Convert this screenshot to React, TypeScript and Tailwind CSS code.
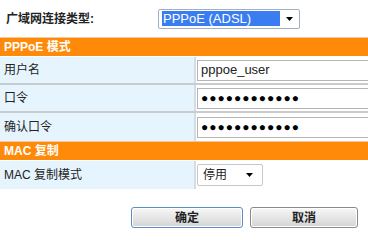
import React from 'react';

const font = { fontFamily: '"Liberation Sans", "Noto Sans CJK SC", sans-serif' };

const SectionHeader: React.FC<{ title: string }> = ({ title }) => (
  <div className="h-[19px] bg-[#ff8a0a] border-t border-[#f2c79a] flex items-center pl-[4px] text-white text-[12px] font-bold">
    {title}
  </div>
);

const Row: React.FC<{ label: string; children: React.ReactNode; last?: boolean }> = ({ label, children, last }) => (
  <div className={`flex h-[28px] ${last ? '' : 'border-b-2 border-[#c9cbcc]'}`}>
    <div className="w-[194px] bg-[#e6f5fd] flex items-center pl-[4px] text-[12px] text-[#222]">{label}</div>
    <div className="flex-1 border-l-2 border-[#d6dde2] bg-white flex items-center pl-[1px]">{children}</div>
  </div>
);

const Dots = () => (
  <span className="tracking-[1px] text-[12px] text-black">{'●●●●●●●●●●●●'}</span>
);

const Arrow = () => (
  <svg width="7" height="4" viewBox="0 0 7 4"><path d="M0 0h7L3.5 4z" fill="#000" /></svg>
);

export default function App() {
  return (
    <div className="w-[368px] h-[240px] bg-white overflow-hidden" style={font}>
      {/* connection type */}
      <div className="h-[37px] flex items-center">
        <div className="w-[158px] pl-[6px] text-[12px] font-bold text-[#222]">广域网连接类型:</div>
        <div className="w-[142px] h-[20px] border border-[#9eb0c8] rounded-[2px] bg-white flex items-center pl-[3px] pr-[6px]">
          <div className="flex-1 h-[15px] bg-[#3a7df0] text-white text-[13px] leading-[15px] pl-[1px]">PPPoE (ADSL)</div>
          <span className="ml-[6px] flex"><Arrow /></span>
        </div>
      </div>

      <SectionHeader title="PPPoE 模式" />
      <div className="h-[1px]" />
      <Row label="用户名">
        <div className="w-full h-[21px] border border-[#b5b5b5] border-r-0 flex items-center pl-[3px] text-[13px] text-[#222]">pppoe_user</div>
      </Row>
      <Row label="口令">
        <div className="w-full h-[21px] border border-[#b5b5b5] border-r-0 flex items-center pl-[3px]"><Dots /></div>
      </Row>
      <Row label="确认口令" last>
        <div className="w-full h-[21px] border border-[#b5b5b5] border-r-0 flex items-center pl-[3px]"><Dots /></div>
      </Row>

      <SectionHeader title="MAC 复制" />
      <div className="h-[1px]" />
      <Row label="MAC 复制模式" last>
        <div className="w-[66px] h-[22px] border border-[#c8c8c8] rounded-[2px] flex items-center pl-[5px] pr-[9px] text-[12px] text-[#222]">
          <span className="flex-1">停用</span>
          <Arrow />
        </div>
      </Row>

      <div className="flex justify-end gap-[7px] pr-[10px] mt-[18px]">
        <button className="w-[112px] h-[21px] rounded-[3px] border border-[#5a8fc4] bg-gradient-to-b from-[#f8f8f8] to-[#d4d4d4] text-[12px] font-bold text-[#222] shadow-[inset_0_0_0_1px_#ffffff]">确定</button>
        <button className="w-[108px] h-[21px] rounded-[3px] border border-[#8a8a8a] bg-gradient-to-b from-[#f8f8f8] to-[#d4d4d4] text-[12px] font-bold text-[#222] shadow-[inset_0_0_0_1px_#ffffff]">取消</button>
      </div>
    </div>
  );
}
